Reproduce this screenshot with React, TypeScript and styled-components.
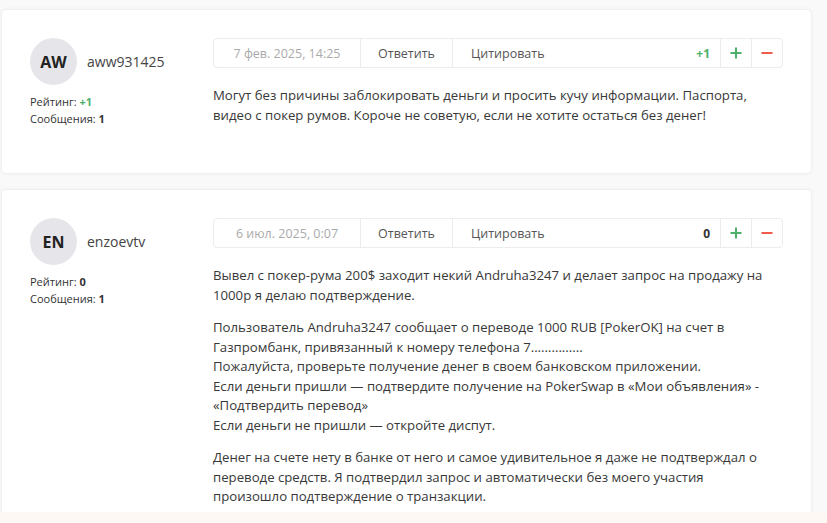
import styled, { createGlobalStyle } from 'styled-components'

const GlobalStyle = createGlobalStyle`
  html, body {
    margin: 0;
    padding: 0;
    background: #f9f9f9;
  }
  body {
    font-family: "Open Sans", "Liberation Sans", sans-serif;
    color: #333;
  }
`

const Page = styled.div`
  display: flex;
  flex-direction: column;
  gap: 15px;
  padding: 9px 15px 0 1px;
  height: 523px;
  box-sizing: border-box;
  overflow: hidden;
  position: relative;
`

const BottomStrip = styled.div`
  position: absolute;
  left: 0;
  right: 0;
  bottom: 0;
  height: 11px;
  background: #fdf8f3;
`

const Card = styled.div<{ $bottom: number }>`
  display: flex;
  background: #fff;
  border: 1px solid #f0f0f0;
  border-radius: 5px;
  box-shadow: 0 0 4px rgba(0, 0, 0, 0.04);
  padding: 28px 28px ${({ $bottom }) => $bottom}px 28px;
  flex-shrink: 0;
`

const Author = styled.div`
  width: 183px;
  flex-shrink: 0;
`

const AuthorHead = styled.div`
  display: flex;
  align-items: center;
  gap: 10px;
`

const Avatar = styled.div`
  width: 47px;
  height: 47px;
  border-radius: 50%;
  background: #e6e6ea;
  display: flex;
  align-items: center;
  justify-content: center;
  font-size: 16px;
  font-weight: 700;
  color: #222;
`

const UserName = styled.div`
  font-size: 14px;
  color: #444;
`

const Stats = styled.div`
  margin-top: 8px;
  font-size: 11px;
  line-height: 17px;
  color: #333;
`

const StatValue = styled.span<{ $green?: boolean }>`
  font-weight: 700;
  color: ${({ $green }) => ($green ? '#4caf6a' : '#333')};
`

const Body = styled.div`
  flex: 1;
  min-width: 0;
`

const Toolbar = styled.div`
  display: flex;
  align-items: stretch;
  height: 28px;
  border: 1px solid #ececec;
  border-radius: 4px;
  font-size: 12.5px;
  margin-bottom: 18px;
`

const Segment = styled.div<{ $w?: number; $muted?: boolean; $open?: boolean }>`
  display: flex;
  align-items: center;
  justify-content: center;
  width: ${({ $w }) => ($w ? `${$w}px` : 'auto')};
  padding: 0 ${({ $w }) => ($w ? 0 : 18)}px;
  border-right: ${({ $open }) => ($open ? 'none' : '1px solid #ececec')};
  color: ${({ $muted }) => ($muted ? '#aaa' : '#555')};
`

const Spacer = styled.div`
  flex: 1;
`

const Score = styled.div<{ $positive?: boolean }>`
  display: flex;
  align-items: center;
  padding: 0 10px;
  border-right: 1px solid #ececec;
  font-weight: 700;
  font-size: 12px;
  color: ${({ $positive }) => ($positive ? '#4caf6a' : '#333')};
`

const VoteButton = styled.div<{ $last?: boolean }>`
  width: 30px;
  display: flex;
  align-items: center;
  justify-content: center;
  border-right: ${({ $last }) => ($last ? 'none' : '1px solid #ececec')};
`

const Text = styled.div`
  font-size: 13.2px;
  line-height: 19.5px;
  color: #383838;

  p {
    margin: 0 0 13px;
  }
  p:last-child {
    margin-bottom: 0;
  }
`

const PlusIcon = () => (
  <svg width="12" height="12" viewBox="0 0 12 12">
    <path d="M6 0.5v11M0.5 6h11" stroke="#4caf6a" strokeWidth="2" />
  </svg>
)

const MinusIcon = () => (
  <svg width="12" height="12" viewBox="0 0 12 12">
    <path d="M0.5 6h11" stroke="#ef5a4a" strokeWidth="2" />
  </svg>
)

type PostProps = {
  initials: string
  name: string
  rating: string
  ratingGreen?: boolean
  date: string
  score: string
  bottom: number
  children: React.ReactNode
}

const Post = ({ initials, name, rating, ratingGreen, date, score, bottom, children }: PostProps) => (
  <Card $bottom={bottom}>
    <Author>
      <AuthorHead>
        <Avatar>{initials}</Avatar>
        <UserName>{name}</UserName>
      </AuthorHead>
      <Stats>
        <div>Рейтинг: <StatValue $green={ratingGreen}>{rating}</StatValue></div>
        <div>Сообщения: <StatValue>1</StatValue></div>
      </Stats>
    </Author>
    <Body>
      <Toolbar>
        <Segment $w={146} $muted>{date}</Segment>
        <Segment $w={91}>Ответить</Segment>
        <Segment $open>Цитировать</Segment>
        <Spacer />
        <Score $positive={score !== '0'}>{score}</Score>
        <VoteButton><PlusIcon /></VoteButton>
        <VoteButton $last><MinusIcon /></VoteButton>
      </Toolbar>
      <Text>{children}</Text>
    </Body>
  </Card>
)

const App = () => (
  <Page>
    <GlobalStyle />
    <Post initials="AW" name="aww931425" rating="+1" ratingGreen date="7 фев. 2025, 14:25" score="+1" bottom={46}>
      <p>
        Могут без причины заблокировать деньги и просить кучу информации. Паспорта,
        видео с покер румов. Короче не советую, если не хотите остаться без денег!
      </p>
    </Post>
    <Post initials="EN" name="enzoevtv" rating="0" date="6 июл. 2025, 0:07" score="0" bottom={40}>
      <p>
        Вывел с покер-рума 200$ заходит некий Andruha3247 и делает запрос на продажу на
        1000р я делаю подтверждение.
      </p>
      <p>
        Пользователь Andruha3247 сообщает о переводе 1000 RUB [PokerOK] на счет в
        Газпромбанк, привязанный к номеру телефона 7...............
        <br />
        Пожалуйста, проверьте получение денег в своем банковском приложении.
        <br />
        Если деньги пришли — подтвердите получение на PokerSwap в «Мои объявления» -
        «Подтвердить перевод»
        <br />
        Если деньги не пришли — откройте диспут.
      </p>
      <p>
        Денег на счете нету в банке от него и самое удивительное я даже не подтверждал о
        переводе средств. Я подтвердил запрос и автоматически без моего участия
        <br />
        произошло подтверждение о транзакции.
      </p>
    </Post>
    <BottomStrip />
  </Page>
)

export default App
